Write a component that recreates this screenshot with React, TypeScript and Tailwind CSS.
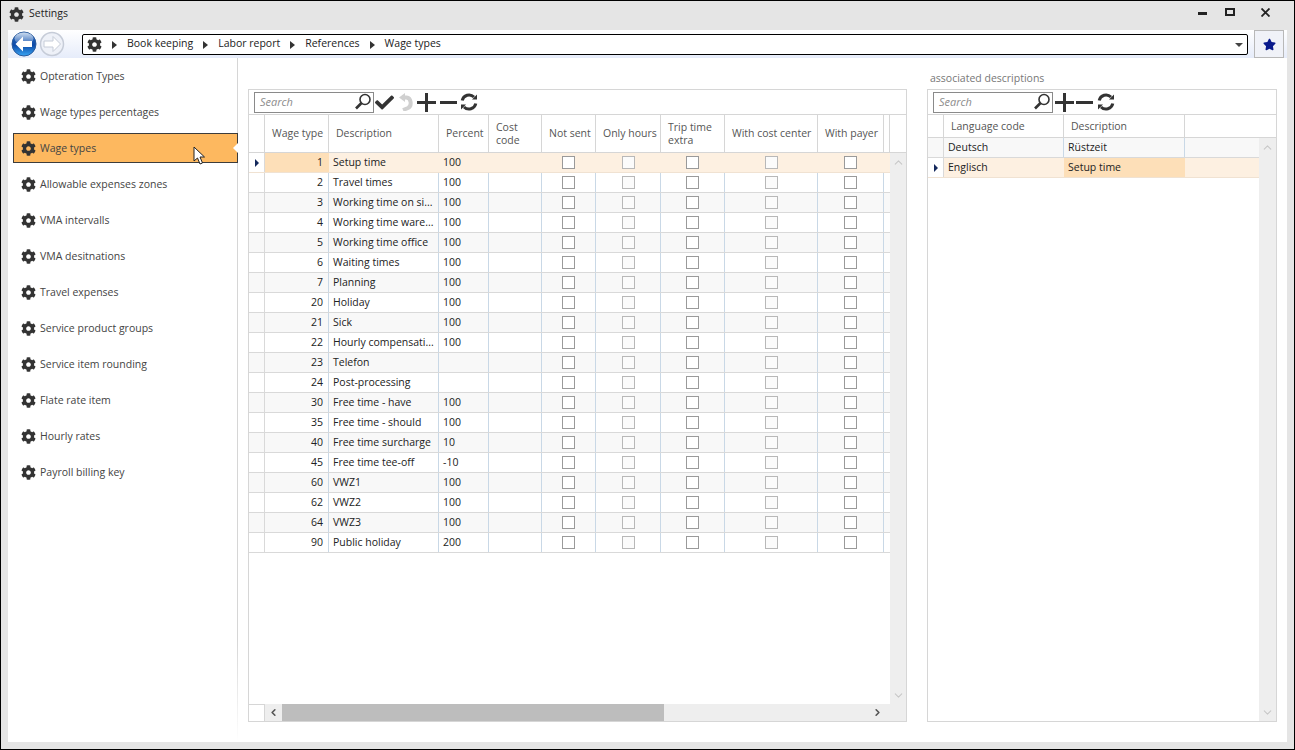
import { FaCog, FaCheck, FaStar } from "react-icons/fa";
import { ChevronUp, ChevronDown, ChevronLeft, ChevronRight } from "lucide-react";

const menu = [
  "Opteration Types",
  "Wage types percentages",
  "Wage types",
  "Allowable expenses zones",
  "VMA intervalls",
  "VMA desitnations",
  "Travel expenses",
  "Service product groups",
  "Service item rounding",
  "Flate rate item",
  "Hourly rates",
  "Payroll billing key",
];

const rows: [number, string, string][] = [
  [1, "Setup time", "100"],
  [2, "Travel times", "100"],
  [3, "Working time on si...", "100"],
  [4, "Working time ware...", "100"],
  [5, "Working time office", "100"],
  [6, "Waiting times", "100"],
  [7, "Planning", "100"],
  [20, "Holiday", "100"],
  [21, "Sick", "100"],
  [22, "Hourly compensati...", "100"],
  [23, "Telefon", ""],
  [24, "Post-processing", ""],
  [30, "Free time - have", "100"],
  [35, "Free time - should", "100"],
  [40, "Free time surcharge", "10"],
  [45, "Free time tee-off", "-10"],
  [60, "VWZ1", "100"],
  [62, "VWZ2", "100"],
  [64, "VWZ3", "100"],
  [90, "Public holiday", "200"],
];

function Tri() {
  return <span className="mx-[10px] h-0 w-0 border-y-[4px] border-l-[5px] border-y-transparent border-l-[#333]" />;
}

function SearchBox({ w }: { w: string }) {
  return (
    <div className={`${w} flex h-[21px] items-center justify-between border border-[#8a8a8a] bg-white pl-[5px] pr-[1px]`}>
      <span className="pt-[1px] text-[11px] italic text-[#8c8c8c]">Search</span>
      <svg width="18" height="18" viewBox="0 0 18 18" fill="none" stroke="#333">
        <circle cx="11" cy="6.5" r="5" strokeWidth="1.6" />
        <path d="M7.5 10 L2 15.5" strokeWidth="2.6" />
      </svg>
    </div>
  );
}

function Plus() {
  return (
    <svg width="19" height="19" viewBox="0 0 19 19" fill="#333">
      <rect x="0" y="8" width="19" height="3" />
      <rect x="8" y="0" width="3" height="19" />
    </svg>
  );
}

function Minus() {
  return (
    <svg width="17" height="19" viewBox="0 0 17 19" fill="#333">
      <rect x="0" y="8" width="17" height="3" />
    </svg>
  );
}

function Refresh() {
  return (
    <svg width="18" height="18" viewBox="0 0 18 18" fill="none">
      <path d="M2.2 7.5 A7 7 0 0 1 14 4" stroke="#333" strokeWidth="3" />
      <path d="M15.8 10.5 A7 7 0 0 1 4 14" stroke="#333" strokeWidth="3" />
      <path d="M17 1.5 V6.5 H12 Z" fill="#333" />
      <path d="M1 16.5 V11.5 H6 Z" fill="#333" />
    </svg>
  );
}

function Undo() {
  return (
    <svg width="14" height="18" viewBox="0 0 14 18" fill="none">
      <path d="M4 4.5 H7.5 A4.5 5.5 0 0 1 9 15 L4 17" stroke="#d0d0d0" strokeWidth="4" />
      <path d="M0 4.5 L6 0 V9 Z" fill="#d0d0d0" />
    </svg>
  );
}

function Check({ light }: { light?: boolean }) {
  return (
    <span className={`block h-[13px] w-[13px] border ${light ? "border-[#b8b8b8] bg-[#fbfbfb]" : "border-[#9a9a9a] bg-white"}`} />
  );
}

function HeadCell({ w, children }: { w: string; children?: React.ReactNode }) {
  return (
    <div className={`${w} flex shrink-0 items-center border-r border-[#d6d6d6] pl-[7px] leading-[13px] text-[#555]`}>
      {children}
    </div>
  );
}

function RowMark() {
  return <span className="h-0 w-0 border-y-[4px] border-l-[4px] border-y-transparent border-l-[#14295c]" />;
}

function CheckCell({ w, light, line }: { w: string; light?: boolean; line: string }) {
  return (
    <div className={`${w} flex shrink-0 items-center justify-center border-r ${line}`}>
      <Check light={light} />
    </div>
  );
}

function WageRow({ row, index }: { row: [number, string, string]; index: number }) {
  const selected = index === 0;
  const bg = selected ? "bg-[#fdf0e1]" : index % 2 === 0 ? "bg-[#f8f8f8]" : "bg-white";
  const line = selected ? "border-[#fdf0e1]" : "border-[#c9d8e6]";
  return (
    <div className={`flex h-5 border-b ${selected ? "border-[#f0e2d2]" : "border-[#d9d9d9]"} ${bg}`}>
      <div className={`flex w-4 shrink-0 items-center justify-center border-r border-[#d9d9d9] ${selected ? "bg-white" : bg}`}>
        {selected && <RowMark />}
      </div>
      <div className={`w-16 shrink-0 border-r pr-[5px] text-right leading-[19px] ${selected ? "border-[#fddfb8] bg-[#fddfb8]" : line}`}>
        {row[0]}
      </div>
      <div className={`w-[110px] shrink-0 truncate border-r pl-[4px] leading-[19px] ${line}`}>{row[1]}</div>
      <div className={`w-[50px] shrink-0 border-r pl-[4px] leading-[19px] ${line}`}>{row[2]}</div>
      <div className={`w-[53px] shrink-0 border-r ${line}`} />
      <CheckCell w="w-[54px]" line={line} />
      <CheckCell w="w-[65px]" line={line} light />
      <CheckCell w="w-16" line={line} />
      <CheckCell w="w-[93px]" line={line} light />
      <CheckCell w="w-[66px]" line={line} />
      <div className="flex-1" />
    </div>
  );
}

export default function App() {
  return (
    <div className="flex h-[750px] w-[1295px] flex-col overflow-hidden border border-black bg-[#e5e5e5] font-['Open_Sans','Liberation_Sans',sans-serif] text-[10.5px] text-[#222]">
      {/* title bar */}
      <div className="flex h-[29px] shrink-0 items-center pb-[3px] pl-2">
        <FaCog size={15} className="text-[#333]" />
        <span className="ml-[5px]">Settings</span>
        <div className="ml-auto flex h-full items-start">
          <span className="mr-[18px] mt-[11px] h-[3px] w-[9px] bg-[#222]" />
          <span className="mr-[26px] mt-[7px] h-2 w-[10px] border-2 border-[#222]" />
          <svg width="9" height="9" viewBox="0 0 9 9" className="mr-[24px] mt-[7px]" stroke="#222" strokeWidth="1.8">
            <path d="M0.5 0.5 L8.5 8.5 M8.5 0.5 L0.5 8.5" />
          </svg>
        </div>
      </div>

      <div className="mx-[7px] flex min-h-0 flex-1 flex-col bg-white">
        {/* navigation bar */}
        <div className="flex h-7 shrink-0 items-start bg-gradient-to-b from-white to-[#e6ecfa] px-[3px]">
          <svg width="26" height="26" viewBox="0 0 26 26" className="mt-[1px]">
            <defs>
              <linearGradient id="backFill" x1="0" y1="0" x2="0" y2="1">
                <stop offset="0" stopColor="#2f6fc0" />
                <stop offset="0.55" stopColor="#0d4aa8" />
                <stop offset="1" stopColor="#39a6f5" />
              </linearGradient>
              <linearGradient id="backGloss" x1="0" y1="0" x2="0" y2="1">
                <stop offset="0" stopColor="#ffffff" stopOpacity="0.75" />
                <stop offset="1" stopColor="#ffffff" stopOpacity="0.1" />
              </linearGradient>
            </defs>
            <circle cx="13" cy="13" r="12" fill="url(#backFill)" stroke="#2a5a9c" />
            <ellipse cx="13" cy="7.5" rx="9.5" ry="6" fill="url(#backGloss)" />
            <path d="M4.5 13 L12 5.5 V10 H21 V16 H12 V20.5 Z" fill="#fff" />
          </svg>
          <svg width="26" height="26" viewBox="0 0 26 26" className="ml-[2px] mt-[1px]">
            <circle cx="13" cy="13" r="11.5" fill="#eef1f8" stroke="#c6ccd8" strokeWidth="1.5" />
            <path d="M21.5 13 L14 5.5 V10 H5 V16 H14 V20.5 Z" fill="#fff" stroke="#c6ccd8" />
          </svg>
          <div className="ml-[17px] mt-[4px] flex h-[21px] w-[1166px] items-center rounded-[2px] border border-black bg-white pl-[4px] pr-[4px]">
            <FaCog size={15} className="text-[#333]" />
            <Tri />
            <span className="pb-[2px]">Book keeping</span>
            <Tri />
            <span className="pb-[2px]">Labor report</span>
            <Tri />
            <span className="pb-[2px]">References</span>
            <Tri />
            <span className="pb-[2px]">Wage types</span>
            <span className="ml-auto h-0 w-0 border-x-[4px] border-t-[4px] border-x-transparent border-t-[#444]" />
          </div>
          <div className="ml-[6px] flex h-[28px] w-[30px] items-center justify-center border border-[#b8b8b8] bg-[#f0f2f8]">
            <FaStar size={13} className="text-[#0a1a8c]" />
          </div>
        </div>

        <div className="flex min-h-0 flex-1">
          {/* side menu */}
          <div className="flex w-[230px] shrink-0">
            <div className="min-w-0 flex-1">
              {menu.map((item) => {
                const active = item === "Wage types";
                return (
                  <div key={item} className="relative flex h-9 items-center">
                    <div
                      className={`ml-[5px] mr-[-1px] flex h-[30px] flex-1 items-center pl-[7px] ${
                        active ? "border border-[#3c3c3c] bg-[#fdb85f]" : "border border-transparent"
                      }`}
                    >
                      <FaCog size={15} className="text-[#333]" />
                      <span className="ml-[4px] pt-[2px] text-[#444]">{item}</span>
                    </div>
                    {active && (
                      <>
                        <span className="absolute right-[-1px] top-[13px] h-0 w-0 border-y-[5px] border-r-[5px] border-y-transparent border-r-white" />
                        <svg width="13" height="20" viewBox="0 0 13 20" className="absolute left-[185px] top-[16px]">
                          <path d="M1 1 V15 L4.5 12 L7 18 L9.5 17 L7 11 H11.5 Z" fill="#fff" stroke="#222" strokeWidth="1" />
                        </svg>
                      </>
                    )}
                  </div>
                );
              })}
            </div>
            <div className="w-px shrink-0 bg-gradient-to-b from-[#d6d6d6] from-[85%] to-white" />
          </div>

          {/* wage types */}
          <div className="ml-[10px] mt-[31px] mb-5 flex w-[659px] shrink-0 flex-col border border-[#d6d6d6]">
            <div className="flex h-[25px] shrink-0 items-center gap-[2px] border-b border-[#d6d6d6] pl-[5px]">
              <SearchBox w="w-[120px]" />
              <FaCheck size={19} className="-ml-[1px] text-[#333]" />
              <span className="ml-[3px]"><Undo /></span>
              <span className="ml-[2px]"><Plus /></span>
              <span className="ml-[2px]"><Minus /></span>
              <span className="ml-[1px]"><Refresh /></span>
            </div>
            <div className="flex h-[38px] shrink-0 border-b border-[#d6d6d6]">
              <div className="w-4 shrink-0 border-r border-[#d6d6d6]" />
              <HeadCell w="w-16">Wage type</HeadCell>
              <HeadCell w="w-[110px]">Description</HeadCell>
              <HeadCell w="w-[50px]">Percent</HeadCell>
              <HeadCell w="w-[53px]">Cost<br />code</HeadCell>
              <HeadCell w="w-[54px]">Not sent</HeadCell>
              <HeadCell w="w-[65px]">Only hours</HeadCell>
              <HeadCell w="w-16">Trip time<br />extra</HeadCell>
              <HeadCell w="w-[93px]">With cost center</HeadCell>
              <HeadCell w="w-[66px]">With payer</HeadCell>
              <div className="w-[6px] shrink-0 border-r border-[#d6d6d6]" />
            </div>
            <div className="flex min-h-0 flex-1">
              <div className="flex-1">
                {rows.map((row, i) => (
                  <WageRow key={row[0]} row={row} index={i} />
                ))}
              </div>
              <div className="flex w-4 shrink-0 flex-col items-center justify-between bg-[#eeeeee] pb-[2px] pt-[3px] text-[#c8c8c8]">
                <ChevronUp size={13} />
                <ChevronDown size={13} />
              </div>
            </div>
            <div className="flex h-[17px] shrink-0">
              <div className="w-4 shrink-0 border-r border-t border-[#d6d6d6] bg-white" />
              <div className="flex w-[17px] shrink-0 items-center justify-center bg-[#eeeeee] text-[#555]">
                <ChevronLeft size={11} strokeWidth={3.5} />
              </div>
              <div className="w-[382px] shrink-0 bg-[#bdbdbd]" />
              <div className="flex flex-1 items-center justify-end bg-[#eeeeee] pr-[23px] text-[#555]">
                <ChevronRight size={11} strokeWidth={3.5} />
              </div>
            </div>
          </div>

          {/* associated descriptions */}
          <div className="ml-5 mb-5 flex w-[350px] shrink-0 flex-col">
            <div className="flex h-[31px] shrink-0 items-end pb-[2px] pl-[3px] text-[#777]">associated descriptions</div>
            <div className="flex min-h-0 flex-1 flex-col border border-[#d6d6d6]">
              <div className="flex h-[25px] shrink-0 items-center gap-[2px] border-b border-[#d6d6d6] pl-[5px]">
                <SearchBox w="w-[120px]" />
                <Plus />
                <Minus />
                <span className="ml-[2px]"><Refresh /></span>
              </div>
              <div className="flex h-[23px] shrink-0 border-b border-[#d6d6d6]">
                <div className="w-4 shrink-0 border-r border-[#d6d6d6]" />
                <HeadCell w="w-[120px]">Language code</HeadCell>
                <HeadCell w="w-[121px]">Description</HeadCell>
              </div>
              <div className="flex min-h-0 flex-1">
                <div className="flex-1">
                  <div className="flex h-5 border-b border-[#d9d9d9] bg-[#f8f8f8] leading-[19px]">
                    <div className="w-4 shrink-0 border-r border-[#d9d9d9]" />
                    <div className="w-[120px] shrink-0 border-r border-[#c9d8e6] pl-[4px]">Deutsch</div>
                    <div className="w-[121px] shrink-0 border-r border-[#c9d8e6] pl-[4px]">Rüstzeit</div>
                  </div>
                  <div className="flex h-5 border-b border-[#f0e2d2] bg-[#fdf0e1] leading-[19px]">
                    <div className="flex w-4 shrink-0 items-center justify-center border-r border-[#d9d9d9] bg-white">
                      <RowMark />
                    </div>
                    <div className="w-[120px] shrink-0 pl-[4px]">Englisch</div>
                    <div className="w-[121px] shrink-0 bg-[#fddfb8] pl-[4px]">Setup time</div>
                  </div>
                </div>
                <div className="flex w-[17px] shrink-0 flex-col items-center justify-between bg-[#eeeeee] pb-[2px] pt-[3px] text-[#c8c8c8]">
                  <ChevronUp size={13} />
                  <ChevronDown size={13} />
                </div>
              </div>
            </div>
          </div>
        </div>
      </div>
      <div className="h-[7px] shrink-0" />
    </div>
  );
}
